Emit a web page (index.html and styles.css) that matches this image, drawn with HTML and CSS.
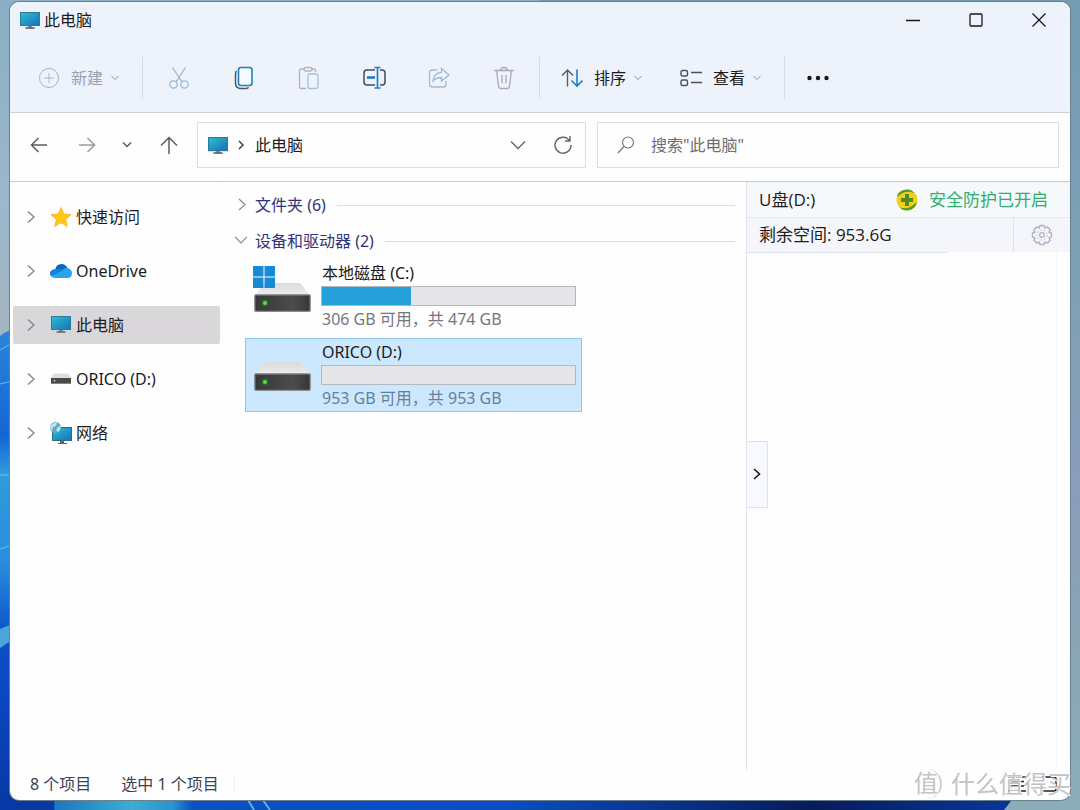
FILE: index.html
```html
<!DOCTYPE html>
<html lang="zh-CN">
<head>
<meta charset="utf-8">
<title>此电脑</title>
<link rel="stylesheet" href="styles.css">
</head>
<body>
<svg class="wallpaper" viewBox="0 0 1080 810" preserveAspectRatio="none" aria-hidden="true">
  <defs>
    <linearGradient id="sky" x1="0" y1="0" x2="0" y2="1"><stop offset="0" stop-color="#8aaec6"/><stop offset=".25" stop-color="#9bb8cc"/><stop offset=".4" stop-color="#a3b4c2"/></linearGradient>
    <linearGradient id="side" x1="0" y1="0" x2="0" y2="1"><stop offset="0" stop-color="#749bb2"/><stop offset=".35" stop-color="#7ea1b5"/><stop offset=".62" stop-color="#8c9dba"/><stop offset=".8" stop-color="#8aa5b3"/><stop offset="1" stop-color="#8badba"/></linearGradient>
    <linearGradient id="bloom" x1="0" y1="0" x2="0" y2="1"><stop offset="0" stop-color="#2c85dc"/><stop offset=".22" stop-color="#1565d4"/><stop offset=".3" stop-color="#2f9bdc"/><stop offset=".48" stop-color="#2a8fdc"/><stop offset=".64" stop-color="#0b50cb"/><stop offset="1" stop-color="#0738a6"/></linearGradient>
    <linearGradient id="floor" x1="0" y1="0" x2="1" y2="0"><stop offset="0" stop-color="#0738a6"/><stop offset=".053" stop-color="#0738a6"/><stop offset=".054" stop-color="#1c78c0"/><stop offset=".13" stop-color="#39aed0"/><stop offset=".17" stop-color="#2b93d0"/><stop offset=".19" stop-color="#0b50c4"/><stop offset=".5" stop-color="#0b4cc4"/><stop offset=".8" stop-color="#071c58"/><stop offset="1" stop-color="#08379c"/></linearGradient>
  </defs>
  <rect width="1080" height="810" fill="url(#sky)"/>
  <rect x="540" width="540" height="810" fill="url(#side)"/>
  <path d="M0 336 Q6 331 12 330V810H0Z" fill="url(#bloom)"/>
  <path d="M0 350 12 343M0 384 12 381M0 475H12M0 549 12 545" stroke="#6cc0e8" stroke-width="1" fill="none"/>
  <path d="M0 629 12 624V640L0 648Z" fill="#4aa6d8"/>
  <path d="M0 796H1015L1004 810H0Z" fill="url(#floor)"/>
  <path d="M248 800 254 810M263 800 270 810" stroke="#5eaeea" stroke-width="2"/>
</svg>

<div class="window">
  <header class="chrome">
    <div class="titlebar">
      <svg class="pc" viewBox="0 0 20 17" aria-hidden="true"><use href="#pc"/></svg>
      <h1>此电脑</h1>
      <div class="caption">
        <button aria-label="最小化"><svg width="14" height="14" viewBox="0 0 14 14"><path d="M0 7.500H14" class="dark"/></svg></button>
        <button aria-label="最大化"><svg width="14" height="14" viewBox="0 0 14 14"><rect x="1" y="1" width="12" height="12" rx="1" class="dark"/></svg></button>
        <button aria-label="关闭"><svg width="14" height="14" viewBox="0 0 14 14"><path d="M.5.5 13.500 13.500M13.500.5.5 13.500" class="dark"/></svg></button>
      </div>
    </div>
    <div class="toolbar">
      <button class="labeled muted"><svg width="22" height="22" viewBox="0 0 22 22"><circle cx="11" cy="11" r="9.500" stroke="#a9b1bd"/><path d="M11 6V16M6 11H16" stroke="#9fbad0"/></svg><span>新建</span><svg class="drop" viewBox="0 0 10 6"><path d="M1.500 1 5 4.500 8.500 1"/></svg></button>
      <span class="sep"></span>
      <div class="tools">
        <button aria-label="剪切"><svg width="22" height="24" viewBox="0 0 22 24"><path d="M4.500 1.500 14 16M17.500 1.500 8 16" stroke="#a9b0bb"/><circle cx="5.500" cy="18.500" r="3.700" stroke="#92bcd9"/><circle cx="16.500" cy="18.500" r="3.700" stroke="#92bcd9"/></svg></button>
        <button aria-label="复制"><svg width="22" height="24" viewBox="0 0 22 24"><path d="M3.500 5Q2.500 6 2.500 8V17Q2.500 22.500 8 22.500H13Q15 22.500 15.500 21.300" stroke="#50555f" stroke-width="1.500"/><rect x="5.500" y="1.500" width="13.500" height="18" rx="2.500" fill="#f4faff" stroke="#2080bd" stroke-width="1.600"/></svg></button>
        <button aria-label="粘贴"><svg width="22" height="24" viewBox="0 0 22 24"><path d="M6 3H3.500Q1.500 3 1.500 5V20.500Q1.500 22.500 3.500 22.500H8M14 3H15.500Q17.500 3 17.500 5V6" stroke="#b0b4c0"/><rect x="6" y="1.500" width="8" height="3.500" rx="1.700" stroke="#b0b4c0"/><rect x="10" y="8" width="10" height="14.500" rx="2" stroke="#a4c1dc"/></svg></button>
        <button aria-label="重命名"><svg width="24" height="24" viewBox="0 0 24 24"><path d="M13 4H5Q2 4 2 7V16Q2 19 5 19H13M18 4H20Q23 4 23 7V16Q23 19 20 19H18" stroke="#444d59" stroke-width="1.500"/><path d="M5 11.500H13" stroke="#1473c5" stroke-width="2.500"/><path d="M12.500 1.500H18.500M15.500 1.500V22M12.500 22H18.500" stroke="#1682c8" stroke-width="1.700"/></svg></button>
        <button aria-label="共享"><svg width="22" height="24" viewBox="0 0 22 24"><path d="M9 4H4.500Q1.500 4 1.500 7V18Q1.500 21 4.500 21H15.500Q18 21 18 18V15" stroke="#b0b7c3"/><path d="M13.500 2.500 21 9 13.500 15V11.500Q8 11.500 5 15Q5.500 7 13.500 6.300Z" stroke="#91bbdc"/></svg></button>
        <button aria-label="删除"><svg width="22" height="24" viewBox="0 0 22 24"><path d="M1 4.500H21M3.500 4.500 5.500 20Q5.800 22.500 8 22.500H14Q16.200 22.500 16.500 20L18.500 4.500M7.500 4.500Q7.500 1.500 11 1.500T14.500 4.500M9 9V17.500M13 9V17.500" stroke="#a8aab7"/></svg></button>
      </div>
      <span class="sep"></span>
      <button class="labeled sort"><svg width="22" height="20" viewBox="0 0 22 20"><path d="M6.500 18.500V2M1 7.500 6.500 2 12 7.500" stroke="#555c67" stroke-width="1.400"/><path d="M16 1.500V18M10.500 12.500 16 18 21.500 12.500" stroke="#1c83bf" stroke-width="1.600"/></svg><span>排序</span><svg class="drop" viewBox="0 0 10 6"><path d="M1.500 1 5 4.500 8.500 1"/></svg></button>
      <button class="labeled"><svg width="22" height="18" viewBox="0 0 22 18"><rect x="1" y="1.500" width="6.500" height="5.500" rx="1.500" stroke="#4a4f5a" stroke-width="1.400"/><rect x="1" y="11" width="6.500" height="5.500" rx="1.500" stroke="#4a4f5a" stroke-width="1.400"/><path d="M11 3.500H22M11 13.500H22" stroke="#4a4f5a" stroke-width="1.400"/></svg><span>查看</span><svg class="drop" viewBox="0 0 10 6"><path d="M1.500 1 5 4.500 8.500 1"/></svg></button>
      <span class="sep"></span>
      <button class="more" aria-label="更多"><svg width="22" height="6" viewBox="0 0 22 6"><circle cx="2.500" cy="3" r="2.200"/><circle cx="11" cy="3" r="2.200"/><circle cx="19.500" cy="3" r="2.200"/></svg></button>
    </div>
  </header>

  <div class="addressrow">
    <nav class="history" aria-label="导航">
      <button aria-label="后退"><svg width="18" height="16" viewBox="0 0 18 16"><path d="M17 8H1.500M8.500 1 1.500 8 8.500 15"/></svg></button>
      <button aria-label="前进" class="off"><svg width="18" height="16" viewBox="0 0 18 16"><path d="M1 8H16.500M9.500 1 16.500 8 9.500 15"/></svg></button>
      <button aria-label="最近" class="recent"><svg width="10" height="6" viewBox="0 0 10 6"><path d="M1 .5 5 4.500 9 .5"/></svg></button>
      <button aria-label="上移"><svg width="18" height="18" viewBox="0 0 18 18"><path d="M9 18V1.500M1 9.500 9 1.500 17 9.500"/></svg></button>
    </nav>
    <div class="field address">
      <svg class="pc" viewBox="0 0 20 17" aria-hidden="true"><use href="#pc"/></svg>
      <svg class="crumb" width="6" height="10" viewBox="0 0 6 10"><path d="M1 1 5 5 1 9"/></svg>
      <a href="#">此电脑</a>
      <button aria-label="地址历史"><svg width="16" height="10" viewBox="0 0 16 10"><path d="M1 1.500 8 8.500 15 1.500"/></svg></button>
      <button aria-label="刷新"><svg width="20" height="20" viewBox="0 0 20 20"><path d="M16.800 6A8 8 0 1 0 18 10M17 1V6H12"/></svg></button>
    </div>
    <label class="field search">
      <svg width="18" height="18" viewBox="0 0 18 18" aria-hidden="true"><circle cx="11" cy="6.500" r="5.500"/><path d="M7 10.500 1 17"/></svg>
      <input type="text" placeholder='搜索"此电脑"' aria-label="搜索">
    </label>
  </div>

  <div class="content">
    <nav class="tree" aria-label="位置">
      <a href="#"><svg class="chev" viewBox="0 0 8 14"><path d="M1 1.500 7 7 1 12.500"/></svg><svg class="place" viewBox="0 0 22 22"><path d="M11 1.500 13.900 8 21 8.700 15.700 13.400 17.200 20.400 11 16.800 4.800 20.400 6.300 13.400 1 8.700 8.100 8Z" fill="#fec619" stroke="#f9b618" stroke-width=".8"/></svg><span>快速访问</span></a>
      <a href="#"><svg class="chev" viewBox="0 0 8 14"><path d="M1 1.500 7 7 1 12.500"/></svg><svg class="place" viewBox="0 0 22 22"><path d="M5 10Q6 4 11.500 4Q16 4 17.500 8.500L13 12 4 17Q0 16.500 0 13Q.5 10 5 10Z" fill="#0b67bd"/><path d="M8 9.500Q10 8 13 10L18 12 11 15 3 17Q0 15.500 0 13 1 9.500 5 9 6.500 8.700 8 9.500Z" fill="#1481da"/><path d="M12 11Q13 8 17 8Q22 8.500 22 13.500 21.500 18 17.500 18H5Q2.500 18 1 16.200Z" fill="#2ba3ee"/></svg><span>OneDrive</span></a>
      <a href="#" class="current" aria-current="page"><svg class="chev" viewBox="0 0 8 14"><path d="M1 1.500 7 7 1 12.500"/></svg><svg class="place" viewBox="-1 -2 22 22"><use href="#pc"/></svg><span>此电脑</span></a>
      <a href="#"><svg class="chev" viewBox="0 0 8 14"><path d="M1 1.500 7 7 1 12.500"/></svg><svg class="place" viewBox="0 0 22 22"><path d="M4 5.500H18L21 10H1Z" fill="#dedede"/><rect x="1" y="10" width="20" height="6" fill="#494949"/><path d="M1 15.500H21" stroke="#858585"/><circle cx="4.500" cy="12.800" r="1" fill="#9ed58f"/></svg><span>ORICO (D:)</span></a>
      <a href="#"><svg class="chev" viewBox="0 0 8 14"><path d="M1 1.500 7 7 1 12.500"/></svg><svg class="place" viewBox="0 0 22 22"><rect x="2.500" y="5.500" width="19" height="13" fill="url(#screen)" stroke="#296e86"/><path d="M10 18.500H14V21H10Z" fill="#596572"/><path d="M8 21.500H17" stroke="#596572"/><circle cx="5.500" cy="5.500" r="5.500" fill="#5ba9c8"/><path d="M1 3Q4 0 7 .5L6 4 3 5 2 9Q-1 6 1 3ZM8 5 10.700 4Q11 8 8 10L6 8Z" fill="#c4e4ee"/></svg><span>网络</span></a>
    </nav>

    <main class="files">
      <section class="group"><button class="grouphead"><svg width="12" height="14" viewBox="0 0 12 14"><path d="M4 1 10 6.500 4 12"/></svg><span>文件夹 (6)</span></button></section>
      <section>
        <div class="group"><button class="grouphead"><svg width="12" height="14" viewBox="0 0 12 14"><path d="M0 3 6 9 12 3"/></svg><span>设备和驱动器 (2)</span></button></div>
        <ul class="drives">
          <li class="drive">
            <svg class="disk" viewBox="0 0 57 56" aria-hidden="true"><use href="#disk"/><path d="M-1 0H9.500V10.500H-1ZM10.500 0H21V10.500H10.500ZM-1 11.500H9.500V22H-1ZM10.500 11.500H21V22H10.500Z" fill="#168ad5"/></svg>
            <div class="info"><span class="name">本地磁盘 (C:)</span><div class="bar"><div class="used" style="width:35%"></div></div><span class="free">306 GB 可用，共 474 GB</span></div>
          </li>
          <li class="drive selected">
            <svg class="disk" viewBox="0 0 57 56" aria-hidden="true"><use href="#disk"/></svg>
            <div class="info"><span class="name">ORICO (D:)</span><div class="bar"></div><span class="free">953 GB 可用，共 953 GB</span></div>
          </li>
        </ul>
      </section>
    </main>

    <aside class="guard">
      <div class="row first">
        <span>U盘(D:)</span>
        <span class="safe"><svg width="22" height="22" viewBox="0 0 22 22" aria-hidden="true"><circle cx="11" cy="11" r="10.500" fill="#f2cf1d"/><path d="M1 8Q2 1 11 .5Q16 .5 18 4 11 1 5 5 2 7 1 8ZM21 13Q19 21 11 21.500 6 21.500 4 18.500 11 20.500 16 17 19 15 21 13Z" fill="#4f9b2c"/><path d="M9 5H13V9H17V13H13V17H9V13H5V9H9Z" fill="#4b8f20"/></svg><span>安全防护已开启</span></span>
      </div>
      <div class="row second">
        <span>剩余空间: 953.6G</span>
        <button aria-label="设置"><svg width="22" height="22" viewBox="0 0 22 22"><path d="M9 1.500H13L13.700 4 16.300 2.900 19.100 5.700 18 8.300 20.500 9V13L18 13.700 19.100 16.300 16.300 19.100 13.700 18 13 20.500H9L8.300 18 5.700 19.100 2.900 16.300 4 13.700 1.500 13V9L4 8.300 2.900 5.700 5.700 2.900 8.300 4Z" stroke="#b4b4bc" stroke-width="1.500" stroke-linejoin="round"/><circle cx="11" cy="11" r="5" stroke="#c4c4ca" stroke-dasharray="2 1.500"/><circle cx="11" cy="11" r="2.300" stroke="#b4b4bc" stroke-width="1.300"/></svg></button>
      </div>
      <div class="panel"><button class="expand" aria-label="展开"><svg width="8" height="12" viewBox="0 0 8 12"><path d="M1 1 6.500 6 1 11" stroke="#15151a" stroke-width="1.600"/></svg></button></div>
    </aside>
  </div>

  <footer class="status">
    <span>8 个项目</span><span class="chosen">选中 1 个项目</span>
    <div class="views">
      <button aria-label="详细信息"><svg width="18" height="16" viewBox="0 0 18 16"><path d="M0 1H18M2 5.500H16M2 10H16M0 15H18"/></svg></button>
      <button aria-label="大图标"><svg width="16" height="16" viewBox="0 0 16 16"><path d="M1 1H13Q15 1 15 3V13Q15 15 13 15H1"/></svg></button>
    </div>
  </footer>
</div>
<div class="watermark"><span class="seal">值</span><span>什么值得买</span></div>

<svg class="defs" aria-hidden="true">
  <defs>
    <linearGradient id="screen" x1="0" y1="0" x2="1" y2="1"><stop offset="0" stop-color="#2fbfd0"/><stop offset="1" stop-color="#1671b8"/></linearGradient>
    <linearGradient id="front" x1="0" y1="0" x2="1" y2="0"><stop offset="0" stop-color="#383838"/><stop offset=".7" stop-color="#4c4c4c"/><stop offset="1" stop-color="#353535"/></linearGradient>
    <linearGradient id="lid" x1="0" y1="0" x2="0" y2="1"><stop offset="0" stop-color="#dadada"/><stop offset="1" stop-color="#ededed"/></linearGradient>
    <g id="pc"><rect x=".5" y=".5" width="19" height="13" fill="url(#screen)" stroke="#2a7c9c"/><path d="M8 14H12V15.500H8Z" fill="#7c8890"/><path d="M5.500 16H14.500" stroke="#46525c" stroke-width="1.300"/></g>
    <g id="disk"><path d="M11 17H46L56 29H1Z" fill="url(#lid)"/><rect x=".8" y="28.800" width="55.400" height="16.500" rx="1" fill="url(#front)" stroke="#8b8b8b" stroke-width="1.300"/><circle cx="11" cy="37" r="3.500" fill="#2b6a2b"/><circle cx="11" cy="37" r="2" fill="#4fe04a"/></g>
  </defs>
</svg>
</body>
</html>
```
FILE: styles.css
```css
* { box-sizing: border-box; }
body {
  margin: 0;
  height: 100vh;
  padding: 2px 10px 10px;
  overflow: hidden;
  position: relative;
  background: #8aaec6;
  font: 16px/22px "Noto Sans", "Noto Sans CJK SC", sans-serif;
  color: #1b1b22;
}
button, input { font: inherit; color: inherit; }
button { border: 0; padding: 0; background: none; display: flex; align-items: center; justify-content: center; }
a { color: inherit; text-decoration: none; }
svg { fill: none; flex: none; display: block; }
.wallpaper { position: absolute; inset: 0; width: 100%; height: 100%; }
.defs { position: absolute; width: 0; height: 0; }

.window {
  position: relative;
  height: 100%;
  display: flex;
  flex-direction: column;
  border-radius: 9px;
  overflow: hidden;
  background: #fefefe;
  box-shadow: 0 0 0 1px #6b7f8c;
}
.chrome { background: #eef2fb; border-bottom: 1px solid #cfd2d9; }
.titlebar { display: flex; align-items: center; height: 36px; padding-left: 10px; }
.titlebar h1 { margin: 0 0 0 4px; font-size: 16px; font-weight: 400; }
.pc { width: 20px; height: 17px; }
.caption { display: flex; margin-left: auto; }
.caption button { width: 63px; height: 36px; }
.dark { stroke: #15171f; stroke-width: 1.3; }

.toolbar { display: flex; align-items: center; padding: 6px 28px 0; height: 74px; }
.labeled { gap: 11px; white-space: nowrap; }
.labeled + .labeled { margin-left: 37px; }
.muted { color: #9a9fae; }
.drop { width: 10px; height: 6px; stroke: #8a8f9a; margin-left: -4px; }
.sep { width: 1px; height: 42px; background: #d6dae4; margin: 0 12px 0 22px; }
.tools { display: flex; gap: 17px; }
.tools button { width: 48px; height: 40px; }
.tools svg { stroke-width: 1.3; }
.tools + .sep { margin: 0 21px 0 11px; }
.more { height: 40px; margin-left: 10px; }
.more svg { fill: #15171f; }

.addressrow {
  display: grid;
  grid-template-columns: 176px 389fr 462fr;
  gap: 11px;
  padding: 9px 11px 13px 0;
  border-bottom: 1px solid #c9c9cb;
}
.history { display: flex; align-items: center; padding-left: 14px; stroke: #5d5b66; stroke-width: 1.5; }
.history button { width: 30px; height: 40px; margin-right: 18px; }
.history .off { stroke: #9b9aa2; margin-right: 15px; }
.history .recent { width: 20px; margin-right: 17px; }
.history button:last-child { margin-right: 0; }
.field { display: flex; align-items: center; height: 46px; border: 1px solid #dcdde0; stroke: #66666c; stroke-width: 1.4; min-width: 0; }
.address { padding: 0 12px 0 10px; }
.address .pc { stroke: none; }
.crumb { margin: 0 11px 0 10px; stroke: #333; }
.address button { width: 20px; height: 30px; margin-left: 25px; }
.address a { margin-right: auto; }
.search { padding-left: 19px; }
.search svg { stroke: #777; stroke-width: 1.2; }
.search input { flex: 1; min-width: 0; border: 0; outline: 0; background: none; padding: 0; margin-left: 16px; }
.search input::placeholder { color: #6d6d72; opacity: 1; }

.content { flex: 1; min-height: 0; display: grid; grid-template-columns: 213px minmax(0, 1fr) 324px; }
.tree { display: flex; flex-direction: column; gap: 16px; padding: 16px 2px 0 3px; border-right: 1px solid #fafafa; }
.tree a { display: flex; align-items: center; height: 38px; padding-left: 14px; border-radius: 2px; }
.tree .current { background: #d9d7da; }
.chev { width: 8px; height: 14px; stroke: #85858b; stroke-width: 1.4; }
.place { width: 22px; height: 22px; margin: 0 4px 0 15px; }

.files { padding: 5px 11px 0 12px; }
.group { display: flex; align-items: center; height: 36px; }
.group::after { content: ""; flex: 1; height: 1px; background: #dedfe3; margin-left: 11px; }
.grouphead { gap: 8px; color: #33337c; }
.grouphead svg { stroke: #8b8b91; stroke-width: 1.2; }
.drives { list-style: none; margin: 0; padding: 0 0 0 10px; display: flex; flex-direction: column; gap: 5px; align-items: flex-start; }
.drive { display: flex; gap: 10px; width: 337px; max-width: 100%; height: 74px; border: 1px solid transparent; padding: 2px 5px 2px 8px; }
.selected { background: #cce8ff; border-color: #8fc6ea; }
.disk { width: 57px; height: 56px; margin-top: 4px; overflow: visible; }
.info { flex: 1; min-width: 0; display: flex; flex-direction: column; white-space: nowrap; }
.name { padding-left: 1px; }
.bar { height: 20px; margin: 2px 0; background: #e5e5e8; border: 1px solid #b5b8bd; }
.used { height: 100%; background: #26a0da; }
.free { padding-left: 1px; color: #76767d; }
.selected .free { color: #66809a; }

.guard { display: flex; flex-direction: column; border-left: 1px solid #e0e3ea; font: 17px/22px "Open Sans", "Noto Sans CJK SC", sans-serif; white-space: nowrap; }
.row { display: flex; align-items: center; justify-content: space-between; padding-left: 12px; background: #f4f6fc; }
.first { height: 36px; padding-right: 22px; background: #f6f9fb; border-bottom: 1px solid #e3e6ee; }
.safe { display: flex; align-items: center; gap: 11px; color: #2fae6c; }
.second { height: 34px; }
.second button { width: 57px; height: 34px; border-left: 1px solid #e0e3ec; }
.panel { flex: 1; display: flex; align-items: center; margin-right: 13px; padding-bottom: 74px; border-right: 1px solid #f6f6f7; }
.panel::before { content: ""; align-self: flex-start; width: 200px; height: 1px; margin-right: -200px; background: #dfe2e8; }
.expand { width: 21px; height: 67px; background: #f7f9fe; border: 1px solid #dbe3ea; border-left: 0; }

.status { display: flex; align-items: center; height: 30px; padding: 0 13px 2px 20px; color: #3b4350; }
.chosen { margin-left: 30px; padding-right: 15px; border-right: 1px solid #f0f0f3; }
.views { display: flex; gap: 15px; margin-left: auto; stroke: #222; stroke-width: 1.5; }

.watermark {
  position: absolute;
  right: 9px;
  bottom: 10px;
  display: flex;
  align-items: center;
  gap: 9px;
  font-size: 24px;
  line-height: 32px;
  color: #c3c3c5;
  text-shadow: 1px 1px 0 #fff;
}
.seal { width: 30px; height: 30px; line-height: 28px; text-align: center; border-right: 2px solid #cfcfd1; border-radius: 50%; }
```
